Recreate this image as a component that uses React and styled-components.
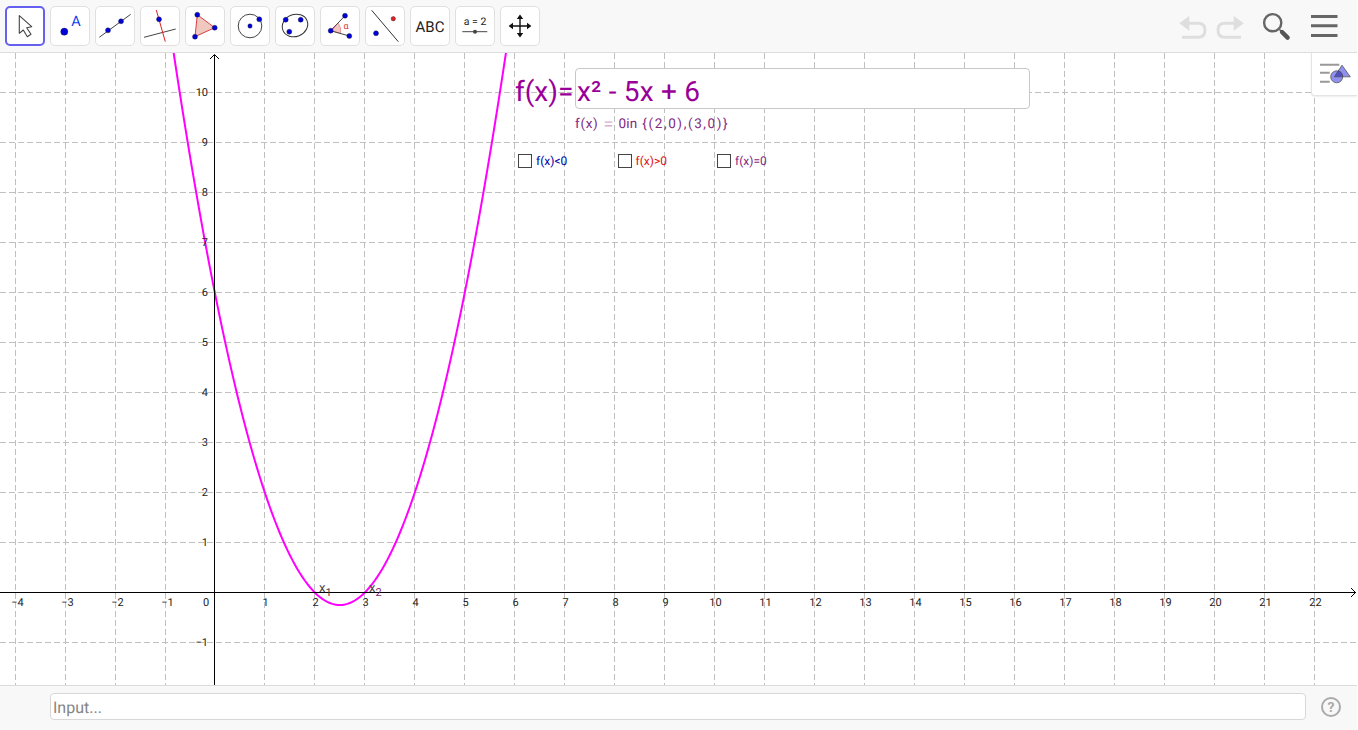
import React from 'react';
import styled, { createGlobalStyle } from 'styled-components';

const GlobalStyle = createGlobalStyle`
  html, body { margin: 0; padding: 0; background: #fff; overflow: hidden; }
  body { font-family: Roboto, "Liberation Sans", sans-serif; text-rendering: geometricPrecision; }
`;

const BLUE = '#0000d8';

const Page = styled.div`
  display: flex;
  flex-direction: column;
  width: 1357px;
  height: 730px;
`;

const Toolbar = styled.div`
  height: 53px;
  flex: none;
  display: flex;
  align-items: center;
  justify-content: space-between;
  padding: 0 19.5px 0 5px;
  box-sizing: border-box;
  background: #f8f8f8;
  border-bottom: 1px solid #dcdcdc;
`;

const ToolGroup = styled.div`
  display: flex;
  gap: 5px;
`;

const ToolButton = styled.div`
  width: 40px;
  height: 40px;
  box-sizing: border-box;
  background: #fff;
  border-radius: 5px;
  border: ${(p) => (p.$active ? '2px solid #6560f0' : '1px solid #e0e0e0')};
  display: flex;
  align-items: center;
  justify-content: center;
  svg { display: block; flex: none; }
`;

const RightIcons = styled.div`
  display: flex;
  align-items: center;
  svg { display: block; }
`;

const Canvas = styled.div`
  position: relative;
  flex: 1;
  min-height: 0;
  background: #fff;
  overflow: hidden;
  svg { display: block; }
`;

const StyleBarButton = styled.div`
  position: absolute;
  top: 0;
  right: 0;
  width: 46px;
  height: 43px;
  box-sizing: border-box;
  background: #fff;
  border-left: 1px solid #e4e4e4;
  border-bottom: 1px solid #e4e4e4;
  border-bottom-left-radius: 4px;
  box-shadow: 0 1px 2px rgba(0, 0, 0, 0.08);
  display: flex;
  align-items: center;
  justify-content: center;
`;

const FormulaPanel = styled.div`
  position: absolute;
  left: 515px;
  top: 15px;
  display: flex;
  flex-direction: column;
`;

const FormulaRow = styled.div`
  display: flex;
  align-items: center;
  height: 41px;
`;

const FormulaLabel = styled.span`
  width: 60px;
  padding-top: 6px;
  font-size: 28px;
  color: #990099;
  white-space: nowrap;
`;

const FormulaInput = styled.div`
  width: 455px;
  height: 41px;
  box-sizing: border-box;
  padding-left: 1px;
  background: #fff;
  border: 1px solid #c8c8c8;
  border-radius: 4px;
  font-size: 28px;
  letter-spacing: 0.2px;
  line-height: 45px;
  color: #990099;
`;

const Solution = styled.div`
  display: flex;
  align-items: center;
  gap: 5px;
  margin: 5px 0 0 60px;
  height: 20px;
  font-size: 13.5px;
  color: #7f2a7f;
  white-space: nowrap;
`;

const MathPart = styled.span`
  letter-spacing: ${(p) => p.$spacing || '0.7px'};
`;

const MathEquals = styled.span`
  font-size: 18px;
  color: #d4b4d4;
`;

const CheckRow = styled.div`
  display: flex;
  margin: 20px 0 0 3px;
`;

const CheckItem = styled.label`
  width: 99.5px;
  display: flex;
  align-items: center;
  gap: 4px;
  font-size: 12px;
  color: ${(p) => p.$color};
`;

const CheckBox = styled.span`
  width: 14px;
  height: 14px;
  box-sizing: border-box;
  border: 1px solid #444;
  background: #fff;
`;

const InputBar = styled.div`
  height: 45px;
  flex: none;
  display: flex;
  align-items: center;
  gap: 14px;
  padding: 0 15px 3px 50px;
  box-sizing: border-box;
  background: #f8f8f8;
  border-top: 1px solid #dcdcdc;
`;

const InputField = styled.div`
  flex: 1;
  height: 27px;
  box-sizing: border-box;
  padding-left: 2px;
  background: #fff;
  border: 1px solid #d8d8d8;
  border-radius: 4px;
  font-size: 16px;
  line-height: 27px;
  color: #858585;
`;

const Dot = ({ x, y, r = 2.5, c = BLUE }) => <circle cx={x} cy={y} r={r} fill={c} stroke="#223" strokeWidth="0.4" />;

const Icon = ({ children }) => (
  <svg width="40" height="40" viewBox="0 0 40 40" fill="none">{children}</svg>
);

const tools = [
  <svg key="m" width="36" height="36" viewBox="2 2 36 36" fill="none">
    <path d="M14.3 9.7 L14.3 27.3 L18.3 24 L22.3 30.7 L26 28.3 L21.7 21.7 L26.7 20.7 Z" fill="#fff" stroke="#444" strokeWidth="1.1" strokeLinejoin="round" />
  </svg>,
  <Icon key="p">
    <circle cx="14.3" cy="25.7" r="3.6" fill={BLUE} stroke="#223" strokeWidth="0.4" />
    <text x="26" y="19.7" textAnchor="middle" fontFamily="Roboto" fontSize="14.5" fill="#0a3cf0">A</text>
  </Icon>,
  <Icon key="l">
    <path d="M4.3 31.3 L35.7 8.3" stroke="#444" strokeWidth="1" />
    <Dot x={13} y={24.3} /><Dot x={26} y={15.3} />
  </Icon>,
  <Icon key="perp">
    <path d="M4 31.3 L35.7 23" stroke="#444" strokeWidth="1" />
    <path d="M16.3 4 L25.3 35.7" stroke="#e02020" strokeWidth="1" />
    <Dot x={19} y={13.3} />
  </Icon>,
  <Icon key="tri">
    <path d="M12.3 8.7 L29.7 21.7 L10 30.7 Z" fill="#f0c8c0" stroke="#d84040" strokeWidth="1" />
    <Dot x={12.3} y={8.7} /><Dot x={29.7} y={21.7} /><Dot x={10} y={30.7} />
  </Icon>,
  <Icon key="circ">
    <circle cx="20" cy="20" r="11.8" stroke="#444" strokeWidth="1" />
    <Dot x={20} y={20} r={2.2} /><Dot x={29.3} y={13.3} />
  </Icon>,
  <Icon key="ell">
    <ellipse cx="20" cy="19.5" rx="13" ry="11" transform="rotate(-22 20 19.5)" stroke="#333" strokeWidth="1" />
    <Dot x={10.7} y={13.7} /><Dot x={25.7} y={13.7} /><Dot x={14.3} y={25.7} />
  </Icon>,
  <Icon key="ang">
    <path d="M10.7 24.7 L18 17 A 12 12 0 0 1 20.5 27.4 Z" fill="#f0c8c0" stroke="#d84040" strokeWidth="0.4" />
    <path d="M25 9.7 L10.7 24.7 L29.3 30" stroke="#444" strokeWidth="1" />
    <path d="M10.7 24.7 L16 19" stroke="#a02080" strokeWidth="1" />
    <Dot x={10.7} y={24.7} /><Dot x={25} y={9.7} /><Dot x={29.3} y={30} />
    <text x="26" y="23" textAnchor="middle" fontFamily="Roboto" fontSize="9" fill="#e03030">α</text>
  </Icon>,
  <Icon key="refl">
    <path d="M6.7 4.3 L33.3 35.7" stroke="#333" strokeWidth="1" />
    <Dot x={28.3} y={12.7} r={2.2} c="#e02020" /><Dot x={11} y={27.3} />
  </Icon>,
  <Icon key="abc">
    <text x="20" y="25.5" textAnchor="middle" fontFamily="Roboto" fontSize="15" fill="#222">ABC</text>
  </Icon>,
  <Icon key="slider">
    <text x="20" y="19" textAnchor="middle" fontFamily="Roboto" fontSize="10.5" fill="#222">a = 2</text>
    <path d="M7.3 25.7 L32.3 25.7" stroke="#444" strokeWidth="1" />
    <circle cx="20" cy="25.7" r="2" fill="#444" />
  </Icon>,
  <Icon key="move">
    <path d="M20 11 L20 29 M11 20 L29 20" stroke="#111" strokeWidth="1.4" />
    <path d="M20 8.6 L23.2 13 L16.8 13 Z M20 31.4 L16.8 27 L23.2 27 Z M8.6 20 L13 16.8 L13 23.2 Z M31.4 20 L27 23.2 L27 16.8 Z" fill="#111" />
  </Icon>,
];

const Undo = ({ flip }) => (
  <svg width="30" height="26" viewBox="0 -1 30 26" fill="none" style={flip ? { transform: 'scaleX(-1)', marginLeft: 6.5 } : undefined}>
    <path d="M1.3 9.3 L11.3 2 L11.3 16.7 Z" fill="#dedede" />
    <path d="M10 9.3 H20 C25 9.3 27 12 27 16 C27 20 25 23.3 20 23.3 H4" stroke="#dedede" strokeWidth="3" />
  </svg>
);

const Search = () => (
  <svg width="32" height="32" viewBox="0 0 32 32" fill="none" style={{ marginLeft: 15.5 }}>
    <circle cx="12.7" cy="12.7" r="8.6" stroke="#666" strokeWidth="2.4" />
    <path d="M19.5 19.5 L21.5 21.5" stroke="#666" strokeWidth="1.6" />
    <path d="M22 22 L27.6 27.6" stroke="#555" strokeWidth="4.4" strokeLinecap="round" />
  </svg>
);

const Menu = () => (
  <svg width="26.5" height="24" viewBox="0 0 26.5 24" fill="none" style={{ marginLeft: 19 }}>
    <path d="M0 2.5 H26.5 M0 11.8 H26.5 M0 21.5 H26.5" stroke="#666" strokeWidth="3" />
  </svg>
);

const StyleBarIcon = () => (
  <svg width="34" height="26" viewBox="0 0 34 26" fill="none">
    <path d="M2 3.8 H21.3 M2 11.8 H11.7 M2 20.8 H11.7" stroke="#999" strokeWidth="2" />
    <path d="M24 4.2 L32.3 15.8 L16.3 15.8 Z" fill="#9090ee" stroke="#555" strokeWidth="0.8" />
    <circle cx="18.7" cy="15.8" r="6" fill="#9090ee" stroke="#555" strokeWidth="0.8" />
    <path d="M16.3 15.8 L20 10 A6 6 0 0 1 24.7 15.8 Z" fill="#5050c8" stroke="#444" strokeWidth="0.6" />
  </svg>
);

const Help = () => (
  <svg width="22" height="22" viewBox="0 0 22 22" fill="none">
    <circle cx="11" cy="11" r="9" stroke="#aaa" strokeWidth="2" />
    <text x="11" y="16" textAnchor="middle" fontFamily="Roboto" fontWeight="700" fontSize="14" fill="#aaa">?</text>
  </svg>
);

const UNIT = 50;
const X0 = 214.5;
const Y0 = 539.5; // 592.5 minus the 53 of the toolbar
const W = 1357;
const H = 632;

const px = (x) => X0 + x * UNIT;
const py = (y) => Y0 - y * UNIT;
// the grid snaps one pixel further right left of the y axis
const gridX = (i) => (i < 0 ? px(i) + 1 : px(i));

const range = (a, b) => Array.from({ length: b - a + 1 }, (_, i) => a + i);

function parabola() {
  const pts = [];
  for (let x = -1; x <= 6; x += 0.05) {
    const y = x * x - 5 * x + 6;
    pts.push(`${(px(x) + 0.3).toFixed(1)},${py(y).toFixed(1)}`);
  }
  return 'M' + pts.join(' L');
}

const AxisLabel = styled.text`
  font-family: Roboto, sans-serif;
  font-size: 11px;
  fill: #222;
`;

function Graph() {
  const xs = range(-4, 22).filter((i) => i !== 0);
  const ys = range(-1, 10).filter((i) => i !== 0);
  return (
    <svg width={W} height={H} viewBox={`0 0 ${W} ${H}`}>
      <g stroke="#c0c0c0" strokeWidth="1" strokeDasharray="6 3">
        {xs.map((i) => <line key={i} x1={gridX(i)} y1={0} x2={gridX(i)} y2={H} />)}
        {ys.map((i) => <line key={i} x1={0} y1={py(i)} x2={W} y2={py(i)} />)}
      </g>
      <path d={parabola()} stroke="#ff00ff" strokeWidth="2" fill="none" />
      <path d={`M0 ${Y0} H${W - 1} M${X0} 2 V${H}`} stroke="#000" strokeWidth="1" fill="none" />
      <path d={`M${W - 6} ${Y0 - 4.5} L${W - 1.5} ${Y0} L${W - 6} ${Y0 + 4.5}`} stroke="#000" strokeWidth="1" fill="none" />
      <path d={`M${X0 - 4.5} 6 L${X0} 1.5 L${X0 + 4.5} 6`} stroke="#000" strokeWidth="1" fill="none" />
      {xs.map((i) => (
        <AxisLabel key={i} x={px(i) + (i < 0 ? 3 : 1)} y={Y0 + 13.5} textAnchor="middle">
          {i < 0 ? `\u2212${-i}` : i}
        </AxisLabel>
      ))}
      {ys.map((i) => (
        <AxisLabel key={i} x={208} y={py(i) + 3.5} textAnchor="end">
          {i < 0 ? `\u2212${-i}` : i}
        </AxisLabel>
      ))}
      <AxisLabel x={206} y={Y0 + 13.5} textAnchor="middle">0</AxisLabel>
      <text x="319" y={Y0 - 1} fontFamily="Roboto" fontSize="13" fill="#444">x<tspan dy="4" fontSize="11">1</tspan></text>
      <text x="369" y={Y0 - 1} fontFamily="Roboto" fontSize="13" fill="#444">x<tspan dy="4" fontSize="11" fill="#7f1f6f">2</tspan></text>
    </svg>
  );
}

export default function App() {
  return (
    <Page>
      <GlobalStyle />
      <Toolbar>
        <ToolGroup>
          {tools.map((t, i) => <ToolButton key={i} $active={i === 0}>{t}</ToolButton>)}
        </ToolGroup>
        <RightIcons>
          <Undo />
          <Undo flip />
          <Search />
          <Menu />
        </RightIcons>
      </Toolbar>
      <Canvas>
        <Graph />
        <FormulaPanel>
          <FormulaRow>
            <FormulaLabel>f(x)=</FormulaLabel>
            <FormulaInput>x² - 5x + 6</FormulaInput>
          </FormulaRow>
          <Solution>
            <MathPart>f(x)</MathPart>
            <MathEquals>=</MathEquals>
            <MathPart $spacing="0.2px">0in</MathPart>
            <MathPart $spacing="1.6px">{'{(2,0),(3,0)}'}</MathPart>
          </Solution>
          <CheckRow>
            <CheckItem $color="#0000aa"><CheckBox />f(x)&lt;0</CheckItem>
            <CheckItem $color="#e01010"><CheckBox />f(x)&gt;0</CheckItem>
            <CheckItem $color="#7f1f7f"><CheckBox />f(x)=0</CheckItem>
          </CheckRow>
        </FormulaPanel>
        <StyleBarButton><StyleBarIcon /></StyleBarButton>
      </Canvas>
      <InputBar>
        <InputField>Input...</InputField>
        <Help />
      </InputBar>
    </Page>
  );
}
